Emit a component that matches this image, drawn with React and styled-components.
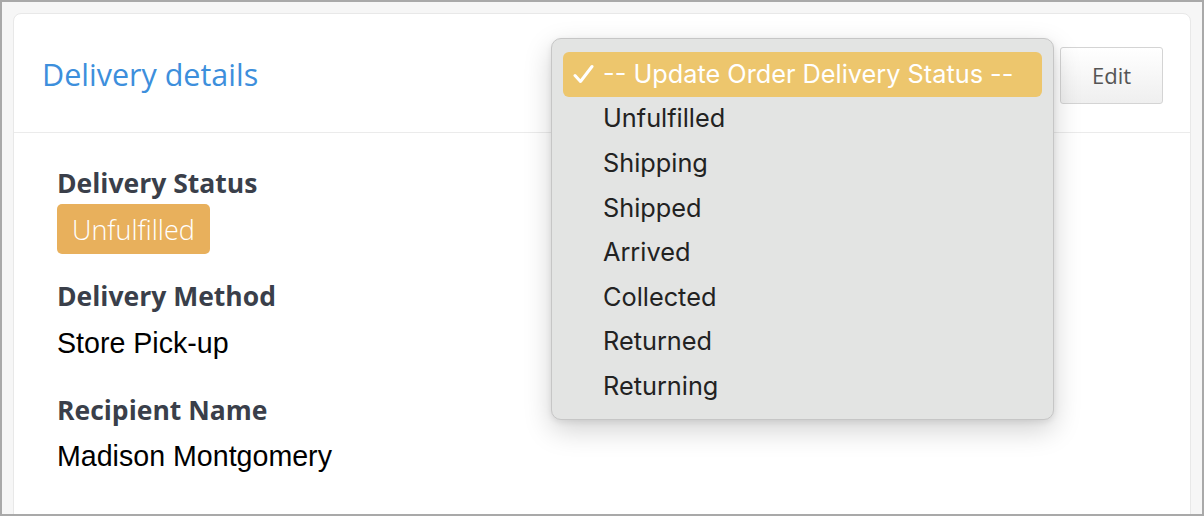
import React from 'react';
import styled, { createGlobalStyle } from 'styled-components';

const GlobalStyle = createGlobalStyle`
  html, body {
    margin: 0;
    padding: 0;
  }
  * {
    box-sizing: border-box;
  }
`;

const Frame = styled.div`
  width: 1204px;
  height: 516px;
  border: 2px solid #a9a9a9;
  background: #f6f6f6;
  padding: 11px 11px 0 11px;
  overflow: hidden;
`;

const Card = styled.div`
  position: relative;
  background: #fff;
  border: 1px solid #e8e8e8;
  border-radius: 8px;
  height: 540px;
`;

const Header = styled.div`
  height: 119px;
  display: flex;
  align-items: center;
  justify-content: space-between;
  padding: 1px 27px 0 28px;
  border-bottom: 1px solid #ebebeb;
`;

const Title = styled.h2`
  margin: 0;
  font-family: "Open Sans", sans-serif;
  font-weight: 400;
  font-size: 30.5px;
  color: #3d8fdc;
`;

const EditButton = styled.button`
  width: 103px;
  height: 57px;
  margin-top: 3px;
  border: 1px solid #d4d4d4;
  border-radius: 3px;
  background: linear-gradient(#ffffff, #efefef);
  font-family: "Open Sans", sans-serif;
  font-size: 22px;
  color: #555;
  cursor: pointer;
`;

const Body = styled.div`
  padding: 34px 0 0 43px;
`;

const Field = styled.div`
  margin-bottom: ${p => p.gap}px;
`;

const Label = styled.div`
  font-family: "Open Sans", sans-serif;
  font-weight: 700;
  font-size: 26.5px;
  line-height: 32px;
  color: #3a3f4a;
`;

const Value = styled.div`
  margin-top: ${p => p.top}px;
  font-family: "Liberation Sans", Arial, sans-serif;
  font-size: 28.6px;
  line-height: 34px;
  color: #000;
`;

const Badge = styled.span`
  display: inline-flex;
  align-items: center;
  margin-top: 5px;
  height: 50px;
  padding: 0 15px;
  border-radius: 5px;
  background: #e8b05c;
  color: #fff;
  font-family: "Open Sans", sans-serif;
  font-weight: 300;
  font-size: 27px;
`;

const Menu = styled.ul`
  position: absolute;
  left: 537px;
  top: 24px;
  width: 503px;
  margin: 0;
  padding: 13px 11px 10px;
  list-style: none;
  background: #e3e4e3;
  border: 1px solid #c6c6c6;
  border-radius: 10px;
  box-shadow: 0 10px 28px rgba(0, 0, 0, 0.18), 0 2px 6px rgba(0, 0, 0, 0.08);
`;

const Option = styled.li`
  position: relative;
  height: 44.6px;
  display: flex;
  align-items: center;
  padding-left: 40px;
  padding-bottom: 2px;
  border-radius: 6px;
  font-family: Inter, "Liberation Sans", sans-serif;
  font-size: 25.3px;
  color: ${p => (p.selected ? '#fff' : '#222')};
  background: ${p => (p.selected ? '#edc66d' : 'transparent')};
`;

const Check = styled.svg`
  position: absolute;
  left: 10px;
  top: 12px;
  width: 21px;
  height: 20px;
`;

const options = [
  '-- Update Order Delivery Status --',
  'Unfulfilled',
  'Shipping',
  'Shipped',
  'Arrived',
  'Collected',
  'Returned',
  'Returning',
];

const App = () => {
  return (
    <Frame>
      <GlobalStyle />
      <Card>
        <Header>
          <Title>Delivery details</Title>
          <EditButton>Edit</EditButton>
        </Header>
        <Body>
          <Field gap={26}>
            <Label>Delivery Status</Label>
            <Badge>Unfulfilled</Badge>
          </Field>
          <Field gap={34}>
            <Label>Delivery Method</Label>
            <Value top={14}>Store Pick-up</Value>
          </Field>
          <Field gap={0}>
            <Label>Recipient Name</Label>
            <Value top={13}>Madison Montgomery</Value>
          </Field>
        </Body>
        <Menu>
          {options.map((o, i) => (
            <Option key={o} selected={i === 0}>
              {i === 0 && (
                <Check viewBox="0 0 21 20">
                  <path d="M2 11.5 L7.5 17.5 L19 2.5" fill="none" stroke="#fff" strokeWidth="3" strokeLinecap="round" strokeLinejoin="round" />
                </Check>
              )}
              {o}
            </Option>
          ))}
        </Menu>
      </Card>
    </Frame>
  );
};

export default App;
